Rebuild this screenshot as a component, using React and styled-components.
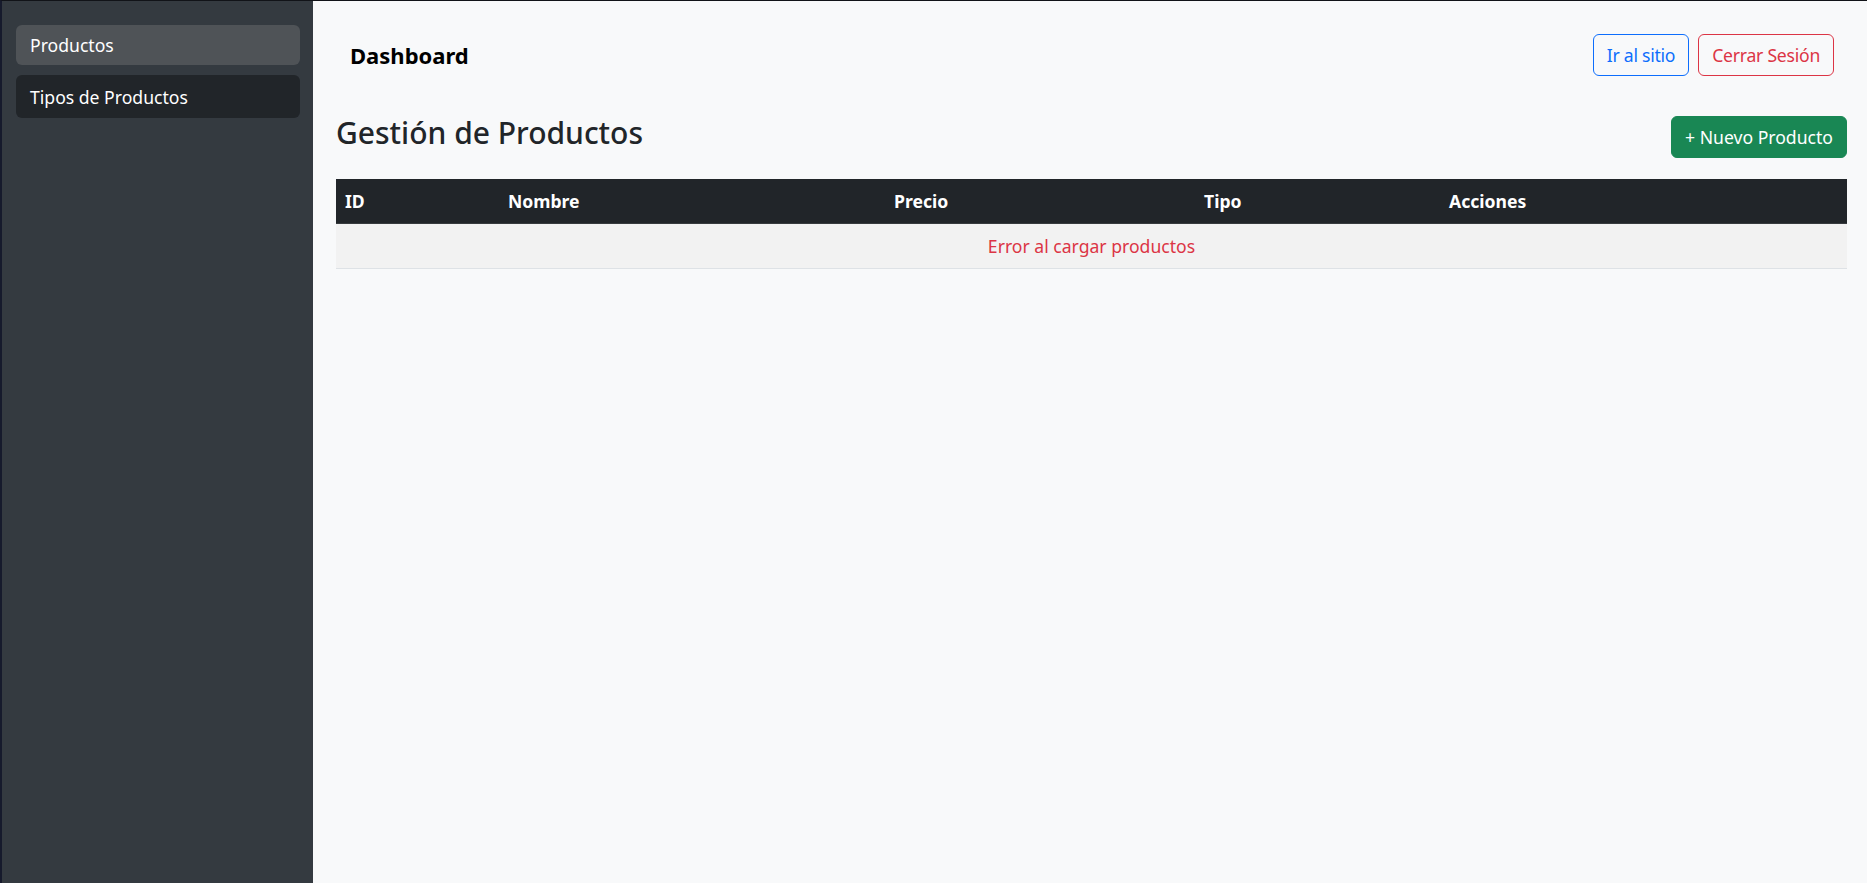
import styled, { createGlobalStyle } from "styled-components";

const GlobalStyle = createGlobalStyle`
  * {
    box-sizing: border-box;
  }
  body {
    margin: 0;
    font-family: "Noto Sans", "Open Sans", sans-serif;
    font-size: 17.6px;
    color: #212529;
    background: #f8f9fa;
  }
`;

const Layout = styled.div`
  display: flex;
  height: 100vh;
  border-top: 1px solid #111318;
  border-left: 2px solid #161a2c;
`;

const Sidebar = styled.aside`
  width: 311px;
  flex-shrink: 0;
  background: #343a40;
  padding: 24px 13px 0 14px;
  display: flex;
  flex-direction: column;
  gap: 10px;
`;

const NavItem = styled.a`
  display: flex;
  align-items: center;
  height: ${(props) => (props.active ? "40px" : "43px")};
  padding: 0 14px;
  border-radius: 6px;
  color: #fff;
  text-decoration: none;
  background: ${(props) => (props.active ? "#4f5357" : "#212529")};
  cursor: pointer;
`;

const Main = styled.main`
  flex: 1;
  padding: 22px 20px 0 23px;
  background: #f8f9fa;
`;

const Navbar = styled.nav`
  display: flex;
  justify-content: space-between;
  align-items: center;
  padding: 11px 13px 11px 14px;
`;

const Brand = styled.span`
  font-size: 22px;
  font-weight: 700;
  color: #000;
`;

const NavButtons = styled.div`
  display: flex;
  gap: 9px;
`;

const Button = styled.button`
  font-family: inherit;
  font-size: 17.6px;
  letter-spacing: ${(props) => (props.solid ? "0" : "-0.25px")};
  line-height: 1.5;
  height: 42px;
  padding: 0 13px;
  border-radius: 6px;
  border: 1px solid ${(props) => props.color};
  color: ${(props) => (props.solid ? "#fff" : props.color)};
  background: ${(props) => (props.solid ? props.color : "transparent")};
  cursor: pointer;
`;

const TitleRow = styled.div`
  display: flex;
  justify-content: space-between;
  align-items: center;
  margin-top: 28px;
`;

const Title = styled.h3`
  margin: 0 0 8px;
  font-size: 30px;
  font-weight: 500;
  line-height: 1.2;
  color: #212529;
`;

const Table = styled.table`
  width: 100%;
  margin-top: 20px;
  border-collapse: collapse;
`;

const HeadCell = styled.th`
  width: ${(props) => props.w};
  text-align: left;
  background: #212529;
  color: #fff;
  font-weight: 700;
  padding: 8.8px 9px;
  line-height: 26.4px;
  border-bottom: 1px solid #373b3e;
`;

const ErrorCell = styled.td`
  text-align: center;
  background: #f2f2f2;
  color: #dc3545;
  padding: 8.8px 9px;
  line-height: 26.4px;
  border-bottom: 1px solid #dee2e6;
`;

const columns = [
  { label: "ID", w: "163px" },
  { label: "Nombre", w: "386px" },
  { label: "Precio", w: "310px" },
  { label: "Tipo", w: "245px" },
  { label: "Acciones", w: "auto" },
];

export default function App() {
  return (
    <>
      <GlobalStyle />
      <Layout>
        <Sidebar>
          <NavItem active>Productos</NavItem>
          <NavItem>Tipos de Productos</NavItem>
        </Sidebar>
        <Main>
          <Navbar>
            <Brand>Dashboard</Brand>
            <NavButtons>
              <Button color="#0d6efd">Ir al sitio</Button>
              <Button color="#dc3545">Cerrar Sesión</Button>
            </NavButtons>
          </Navbar>
          <TitleRow>
            <Title>Gestión de Productos</Title>
            <Button color="#198754" solid>+ Nuevo Producto</Button>
          </TitleRow>
          <Table>
            <thead>
              <tr>
                {columns.map((c) => (
                  <HeadCell key={c.label} w={c.w}>
                    {c.label}
                  </HeadCell>
                ))}
              </tr>
            </thead>
            <tbody>
              <tr>
                <ErrorCell colSpan={5}>Error al cargar productos</ErrorCell>
              </tr>
            </tbody>
          </Table>
        </Main>
      </Layout>
    </>
  );
}
